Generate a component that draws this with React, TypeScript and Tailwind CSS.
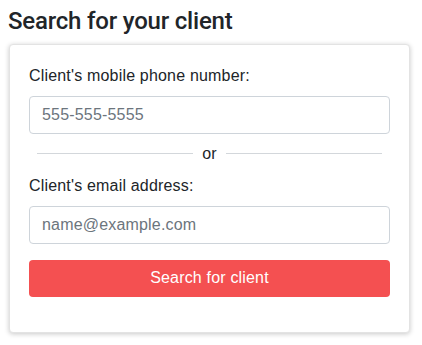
import React from "react";

export default function App() {
  return (
    <div
      className="w-[422px] h-[345px] bg-white pt-[7px] text-[#212529] tracking-[0.18px]"
      style={{ fontFamily: '"Liberation Sans", Arial, sans-serif' }}
    >
      <h4
        className="ml-[8px] mb-[8px] text-[24px] leading-[28.8px] font-medium tracking-[-0.2px] text-[#212529]"
        style={{ fontFamily: 'Roboto, "Liberation Sans", Arial, sans-serif' }}
      >
        Search for your client
      </h4>
      <div className="ml-[9px] w-[401px] rounded-[4px] border border-[#e3e3e3] bg-white px-[19px] pt-[19px] pb-[35px] shadow-[0_1px_5px_rgba(0,0,0,0.22)]">
        <label className="block text-[16px] leading-[24px] mb-[8px]">
          Client's mobile phone number:
        </label>
        <input
          type="text"
          placeholder="555-555-5555"
          className="block w-full h-[38px] rounded-[4px] border border-[#ced4da] bg-white px-[12px] text-[16px] leading-[24px] tracking-[0.18px] text-[#495057] placeholder:text-[#6c757d] outline-none"
        />
        <div className="mt-[8px] flex items-center gap-[9px] px-[8px] h-[24px]">
          <div className="flex-1 h-px bg-[#d3d7db]" />
          <span className="text-[16px] leading-[24px]">or</span>
          <div className="flex-1 h-px bg-[#d3d7db]" />
        </div>
        <label className="block mt-[8px] text-[16px] leading-[24px] mb-[8px]">
          Client's email address:
        </label>
        <input
          type="email"
          placeholder="name@example.com"
          className="block w-full h-[38px] rounded-[4px] border border-[#ced4da] bg-white px-[12px] text-[16px] leading-[24px] tracking-[0.18px] text-[#495057] placeholder:text-[#6c757d] outline-none"
        />
        <button
          type="button"
          className="mt-[16px] block w-full h-[37px] rounded-[4px] bg-[#f45051] text-white text-[16px] leading-[24px] tracking-[0.18px]"
        >
          Search for client
        </button>
      </div>
    </div>
  );
}
